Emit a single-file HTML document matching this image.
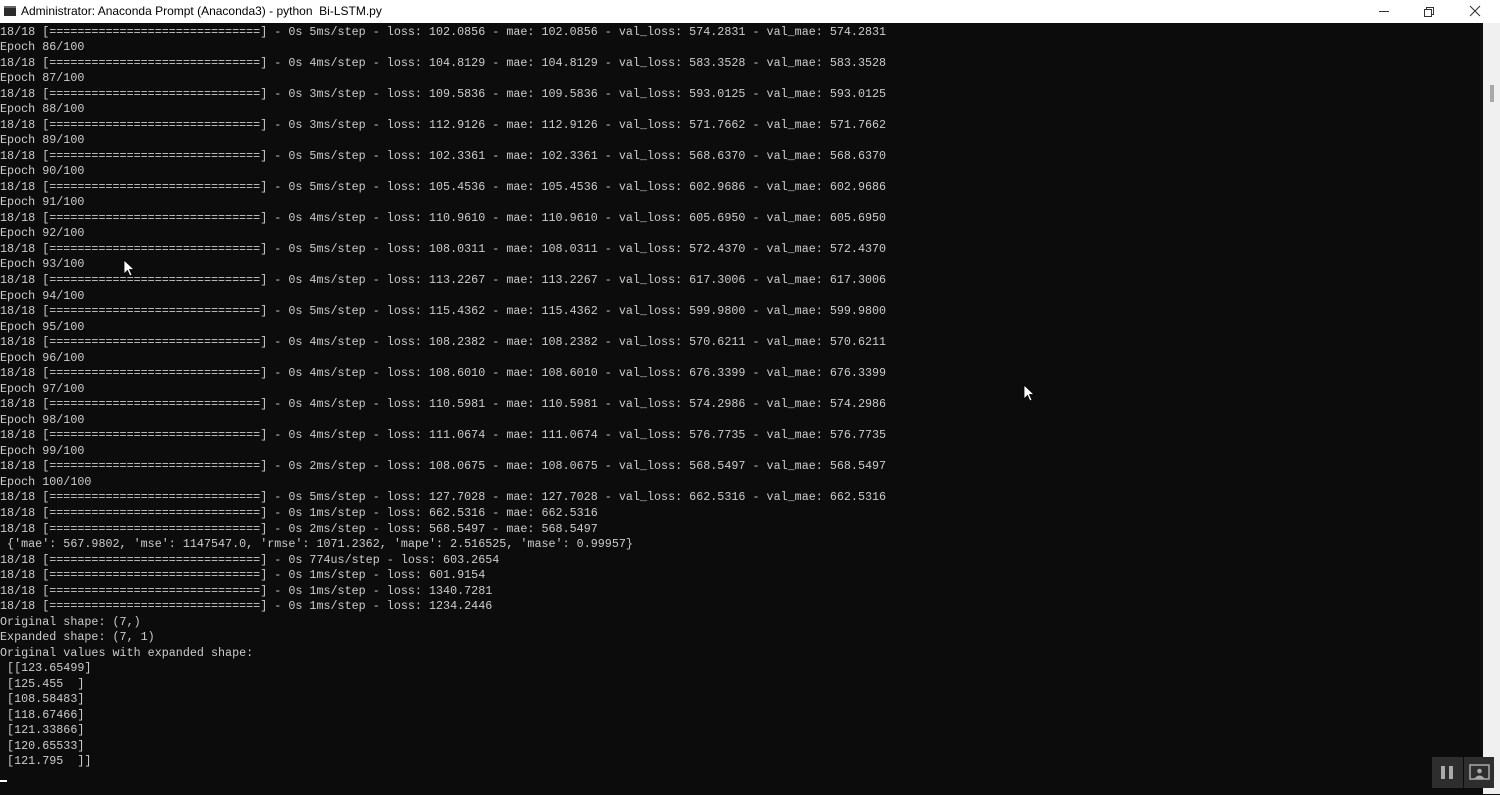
<!DOCTYPE html>
<html><head><meta charset="utf-8"><style>
html,body{margin:0;padding:0;width:1500px;height:794px;overflow:hidden;background:#0c0c0c;}
#title{position:absolute;left:0;top:0;width:1500px;height:23px;background:#fff;font-family:"Liberation Sans",sans-serif;font-size:12px;color:#000;}
#title .t{position:absolute;left:21px;top:4px;}
#title .ic{position:absolute;left:4px;top:6px;width:12px;height:10px;background:#2a2a2a;border-top:2px solid #666;box-sizing:border-box;}
#term{position:absolute;left:0;top:24.5px;width:1483px;height:770px;background:#0c0c0c;}
pre{margin:0;font-family:"Liberation Mono",monospace;font-size:11.72px;line-height:15.53px;color:#cccccc;white-space:pre;}
#sb{position:absolute;left:1483px;top:23px;width:17px;height:771px;background:#f0f0f0;}
#thumb{position:absolute;left:1490px;top:85px;width:4px;height:17px;background:#a8a8a8;}
.btn{position:absolute;top:0;}
</style></head><body>
<div id="title"><div class="ic"></div><span class="t">Administrator: Anaconda Prompt (Anaconda3) - python&nbsp; Bi-LSTM.py</span>
<svg class="btn" style="left:1370px" width="130" height="23">
<line x1="9" y1="11.5" x2="19" y2="11.5" stroke="#333" stroke-width="1"/>
<rect x="54.5" y="9.5" width="7" height="7" fill="none" stroke="#333"/>
<path d="M56.5 9.5V7.5H63.5V14.5H61.5" fill="none" stroke="#333"/>
<path d="M100 6L110 16M110 6L100 16" stroke="#333" stroke-width="1.1"/>
</svg></div>
<div id="term"><pre>18/18 [==============================] - 0s 5ms/step - loss: 102.0856 - mae: 102.0856 - val_loss: 574.2831 - val_mae: 574.2831
Epoch 86/100
18/18 [==============================] - 0s 4ms/step - loss: 104.8129 - mae: 104.8129 - val_loss: 583.3528 - val_mae: 583.3528
Epoch 87/100
18/18 [==============================] - 0s 3ms/step - loss: 109.5836 - mae: 109.5836 - val_loss: 593.0125 - val_mae: 593.0125
Epoch 88/100
18/18 [==============================] - 0s 3ms/step - loss: 112.9126 - mae: 112.9126 - val_loss: 571.7662 - val_mae: 571.7662
Epoch 89/100
18/18 [==============================] - 0s 5ms/step - loss: 102.3361 - mae: 102.3361 - val_loss: 568.6370 - val_mae: 568.6370
Epoch 90/100
18/18 [==============================] - 0s 5ms/step - loss: 105.4536 - mae: 105.4536 - val_loss: 602.9686 - val_mae: 602.9686
Epoch 91/100
18/18 [==============================] - 0s 4ms/step - loss: 110.9610 - mae: 110.9610 - val_loss: 605.6950 - val_mae: 605.6950
Epoch 92/100
18/18 [==============================] - 0s 5ms/step - loss: 108.0311 - mae: 108.0311 - val_loss: 572.4370 - val_mae: 572.4370
Epoch 93/100
18/18 [==============================] - 0s 4ms/step - loss: 113.2267 - mae: 113.2267 - val_loss: 617.3006 - val_mae: 617.3006
Epoch 94/100
18/18 [==============================] - 0s 5ms/step - loss: 115.4362 - mae: 115.4362 - val_loss: 599.9800 - val_mae: 599.9800
Epoch 95/100
18/18 [==============================] - 0s 4ms/step - loss: 108.2382 - mae: 108.2382 - val_loss: 570.6211 - val_mae: 570.6211
Epoch 96/100
18/18 [==============================] - 0s 4ms/step - loss: 108.6010 - mae: 108.6010 - val_loss: 676.3399 - val_mae: 676.3399
Epoch 97/100
18/18 [==============================] - 0s 4ms/step - loss: 110.5981 - mae: 110.5981 - val_loss: 574.2986 - val_mae: 574.2986
Epoch 98/100
18/18 [==============================] - 0s 4ms/step - loss: 111.0674 - mae: 111.0674 - val_loss: 576.7735 - val_mae: 576.7735
Epoch 99/100
18/18 [==============================] - 0s 2ms/step - loss: 108.0675 - mae: 108.0675 - val_loss: 568.5497 - val_mae: 568.5497
Epoch 100/100
18/18 [==============================] - 0s 5ms/step - loss: 127.7028 - mae: 127.7028 - val_loss: 662.5316 - val_mae: 662.5316
18/18 [==============================] - 0s 1ms/step - loss: 662.5316 - mae: 662.5316
18/18 [==============================] - 0s 2ms/step - loss: 568.5497 - mae: 568.5497
 {'mae': 567.9802, 'mse': 1147547.0, 'rmse': 1071.2362, 'mape': 2.516525, 'mase': 0.99957}
18/18 [==============================] - 0s 774us/step - loss: 603.2654
18/18 [==============================] - 0s 1ms/step - loss: 601.9154
18/18 [==============================] - 0s 1ms/step - loss: 1340.7281
18/18 [==============================] - 0s 1ms/step - loss: 1234.2446
Original shape: (7,)
Expanded shape: (7, 1)
Original values with expanded shape:
 [[123.65499]
 [125.455  ]
 [108.58483]
 [118.67466]
 [121.33866]
 [120.65533]
 [121.795  ]]
</pre></div>
<div style="position:absolute;left:0;top:780px;width:7px;height:2px;background:#fff;"></div>
<div id="sb"></div><div id="thumb"></div>
<svg style="position:absolute;left:123px;top:259px" width="12" height="18"><path d="M1 1V15L4.5 11.5L7 17L9 16L6.5 10.5H11Z" fill="#fff" stroke="#000" stroke-width="0.8"/></svg>
<svg style="position:absolute;left:1023px;top:384px" width="12" height="18"><path d="M1 1V15L4.5 11.5L7 17L9 16L6.5 10.5H11Z" fill="#fff" stroke="#000" stroke-width="0.8"/></svg>
<div style="position:absolute;left:1432px;top:757px;width:31px;height:31px;background:#2e2e2e;"></div>
<div style="position:absolute;left:1464px;top:757px;width:30px;height:31px;background:#2e2e2e;"></div>
<div style="position:absolute;left:1441px;top:766px;width:4px;height:13px;background:#aaa;"></div>
<div style="position:absolute;left:1449px;top:766px;width:4px;height:13px;background:#aaa;"></div>
<svg style="position:absolute;left:1469px;top:764px" width="22" height="17"><rect x="1" y="1" width="19" height="14" fill="none" stroke="#aaa" stroke-width="1.5"/><circle cx="10.5" cy="7" r="2.3" fill="#aaa"/><path d="M5 15Q10.5 8 16 15Z" fill="#aaa"/></svg>
</body></html>
